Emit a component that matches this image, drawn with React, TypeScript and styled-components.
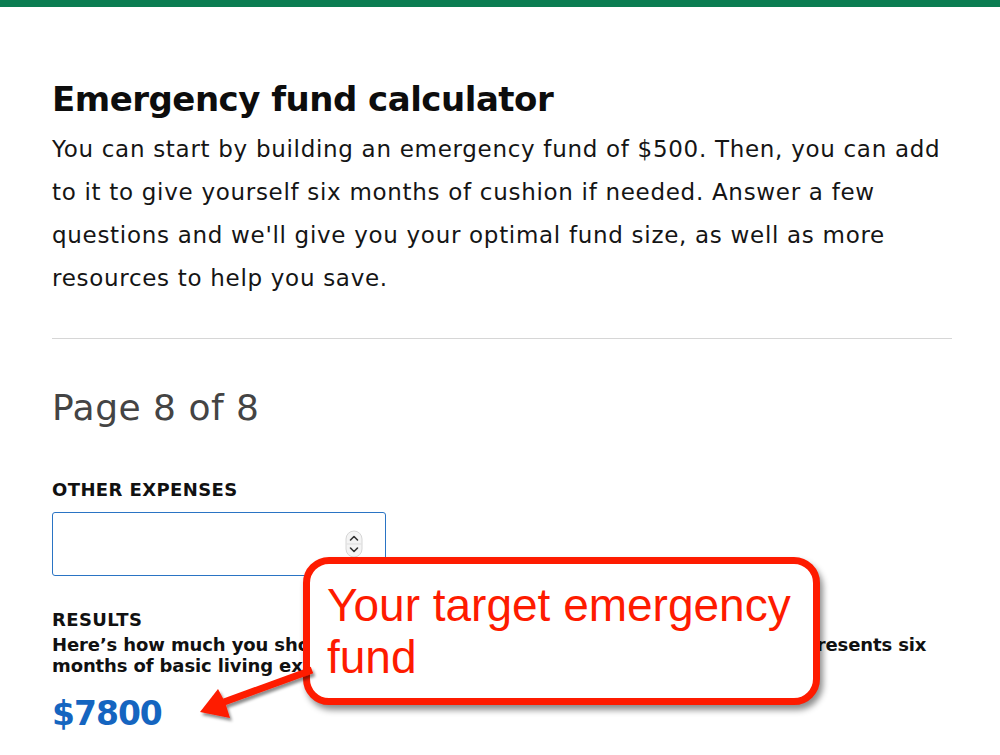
import React from "react";
import styled, { createGlobalStyle } from "styled-components";

const GlobalStyle = createGlobalStyle`
    html, body {
        margin: 0;
        padding: 0;
        background: #FFF;
    }
    body {
        font-family: "DejaVu Sans", "Open Sans", sans-serif;
        color: #111;
    }
`;

const SpinnerIcon = () => (
    <svg width="18" height="28" viewBox="0 0 18 28">
        <rect x="1" y="1" width="16" height="26" rx="8" fill="#F4F4F4" stroke="#D6D6D6" strokeWidth="1" />
        <line x1="1.5" y1="14" x2="16.5" y2="14" stroke="#DDD" strokeWidth="1" />
        <path d="M5.5 10 L9 6.5 L12.5 10" fill="none" stroke="#333" strokeWidth="1.6" strokeLinecap="round" strokeLinejoin="round" />
        <path d="M5.5 18 L9 21.5 L12.5 18" fill="none" stroke="#333" strokeWidth="1.6" strokeLinecap="round" strokeLinejoin="round" />
    </svg>
);

const CalloutArrow = () => (
    <ArrowSvg width="130" height="70" viewBox="0 0 130 70">
        <defs>
            <filter id="arrowShadow" x="-20%" y="-30%" width="150%" height="180%">
                <feDropShadow dx="2" dy="3" stdDeviation="1.8" floodColor="#000" floodOpacity="0.45" />
            </filter>
        </defs>
        <g filter="url(#arrowShadow)" fill="#FE1B00">
            <path d="M35.25 43.27 L123.25 11.27 L120.75 4.73 L32.75 36.73 Z" />
            <path d="M10 50 L28 27 L35 40 L40 56 Z" />
        </g>
    </ArrowSvg>
);

export default function App() {
    return (
        <>
            <GlobalStyle />
            <TopBar />
            <Main>
                <Title>Emergency fund calculator</Title>
                <Intro>
                    You can start by building an emergency fund of $500. Then, you can add<br />
                    to it to give yourself six months of cushion if needed. Answer a few<br />
                    questions and we'll give you your optimal fund size, as well as more<br />
                    resources to help you save.
                </Intro>
                <Divider />
                <PageCount>Page 8 of 8</PageCount>
                <FieldLabel $top={49}>Other expenses</FieldLabel>
                <NumberBox>
                    <SpinnerIcon />
                </NumberBox>
                <ResultsBlock>
                    <FieldLabel $top={33}>Results</FieldLabel>
                    <ResultsText>
                        Here’s how much you should save in your emergency fund. This amount represents six<br />
                        months of basic living expenses.
                    </ResultsText>
                    <Amount>$7800</Amount>
                    <Callout>
                        Your target emergency<br />fund
                    </Callout>
                    <CalloutArrow />
                </ResultsBlock>
            </Main>
        </>
    );
}

//style

const TopBar = styled.div`
    height: 7px;
    background-color: #0B7D52;
`;

const Main = styled.main`
    display: flex;
    flex-direction: column;
    align-items: flex-start;
    padding: 0 48px 0 52px;
`;

const Title = styled.h1`
    margin: 70px 0 0 0;
    font-size: 34px;
    line-height: 44px;
    font-weight: 700;
    color: #0D0D0D;
    letter-spacing: -0.5px;
`;

const Intro = styled.p`
    margin: 7px 0 0 0;
    font-size: 23px;
    line-height: 43px;
    font-weight: 400;
    color: #151515;
    white-space: nowrap;
    letter-spacing: 0.7px;
`;

const Divider = styled.hr`
    align-self: stretch;
    margin: 38px 0 0 0;
    border: none;
    border-top: 1px solid #D6D6D6;
`;

const PageCount = styled.h2`
    margin: 47px 0 0 0;
    font-size: 36px;
    line-height: 44px;
    font-weight: 400;
    color: #444;
    letter-spacing: 0.5px;
`;

const FieldLabel = styled.div<{ $top: number }>`
    margin-top: ${p => p.$top}px;
    font-size: 18px;
    line-height: 22px;
    font-weight: 700;
    text-transform: uppercase;
    color: #111;
    letter-spacing: 0.4px;
`;

const NumberBox = styled.div`
    box-sizing: border-box;
    width: 334px;
    height: 64px;
    margin-top: 11px;
    border: 1.5px solid #2A74C4;
    border-radius: 3px;
    display: flex;
    align-items: center;
    justify-content: flex-end;
    padding-right: 22px;
`;

const ResultsBlock = styled.div`
    position: relative;
    display: flex;
    flex-direction: column;
    align-items: flex-start;
    align-self: stretch;
`;

const ResultsText = styled.div`
    margin-top: 3px;
    font-size: 18px;
    line-height: 21px;
    font-weight: 700;
    color: #111;
    white-space: nowrap;
    letter-spacing: -0.12px;
`;

const Amount = styled.div`
    margin-top: 18px;
    font-size: 33px;
    line-height: 40px;
    font-weight: 700;
    color: #1565C0;
    letter-spacing: -1px;
`;

const Callout = styled.div`
    position: absolute;
    left: 251px;
    top: -19px;
    box-sizing: border-box;
    width: 517px;
    height: 148px;
    padding: 15px 0 0 17px;
    border: 7px solid #FE1B00;
    border-radius: 26px;
    background: #FFF;
    box-shadow: 3px 5px 6px rgba(0, 0, 0, 0.45);
    font-family: "Liberation Sans", Arial, sans-serif;
    font-size: 46px;
    line-height: 52px;
    color: #FE1B00;
`;

const ArrowSvg = styled.svg`
    position: absolute;
    left: 138px;
    top: 86px;
    overflow: visible;
`;
